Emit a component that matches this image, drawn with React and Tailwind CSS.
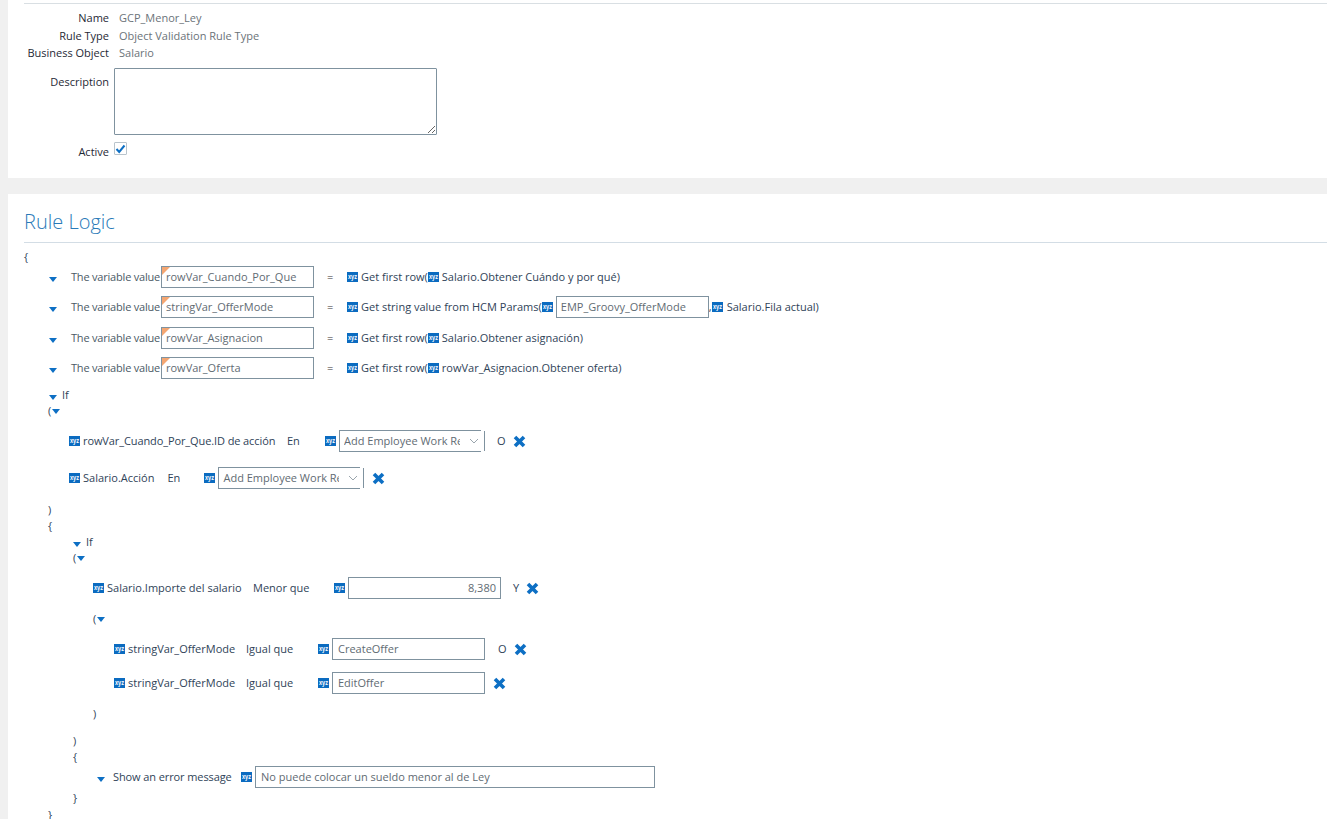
import React from 'react';

const XyzIcon = () => (
  <svg width="11" height="10" viewBox="0 0 11 10" className="shrink-0">
    <rect width="11" height="10" fill="#0b6bc0" />
    <text x="5.5" y="7.2" textAnchor="middle" textLength="9" lengthAdjust="spacingAndGlyphs" fontSize="7" fontWeight="700" fill="#fff" fontFamily="Liberation Sans, sans-serif">xyz</text>
  </svg>
);

const Caret = ({ className = 'mt-[4px]' }) => (
  <svg width="8" height="5" viewBox="0 0 8 5" className={`shrink-0 ${className}`}>
    <path d="M0 0H8L4 5Z" fill="#0d6fc4" />
  </svg>
);

const CloseIcon = () => (
  <svg width="13" height="13" viewBox="0 0 13 13" className="shrink-0">
    <path d="M2 2L11 11M11 2L2 11" stroke="#0d6fc4" strokeWidth="3.6" />
  </svg>
);

const Field = ({ value, className = '', flag = false, align = 'text-left' }) => (
  <div className={`relative ml-[3px] flex h-[22px] shrink-0 items-center border border-[#7f929f] text-[#5f6b73] ${align} ${className}`}>
    {flag && (
      <span className="absolute left-0 top-0 h-0 w-0 border-r-[8px] border-t-[8px] border-r-transparent border-t-[#f4a672]" />
    )}
    <span className="w-full">{value}</span>
  </div>
);

const Choice = () => (
  <div className="ml-[3px] flex shrink-0 items-center">
    <div className="flex h-[22px] w-[142px] items-center border-y border-l border-[#7f929f] pl-[4px] text-[#5f6b73]">
      <span className="w-[116px] overflow-hidden whitespace-nowrap">Add Employee Work Re</span>
      <svg width="10" height="6" viewBox="0 0 10 6" className="ml-[9px]">
        <path d="M1 1L5 5L9 1" fill="none" stroke="#9aa5ad" />
      </svg>
    </div>
    <span className="ml-[3px] h-[20px] w-px bg-[#7f929f]" />
  </div>
);

const Row = ({ className = '', children }) => (
  <div className={`flex h-[22px] items-center whitespace-nowrap ${className}`}>{children}</div>
);

const Line = ({ className = '', children }) => (
  <div className={`flex h-4 items-center whitespace-nowrap ${className}`}>{children}</div>
);

const VariableRow = ({ name, className, children }) => (
  <Row className={`pl-[25px] ${className}`}>
    <Caret />
    <span className="ml-[14px] w-[90px] tracking-[-0.2px] text-[#4b5a66]">The variable value</span>
    <div className="-ml-[3px]">
      <Field value={name} flag className="w-[153px] pl-[4px]" />
    </div>
    <span className="ml-[13px] w-[20px] text-[#333]">=</span>
    <XyzIcon />
    {children}
  </Row>
);

const Info = ({ label, value, height }) => (
  <div className={`flex items-center ${height}`}>
    <span className="w-[85px] text-right text-[#1f2a36]">{label}</span>
    <span className="ml-[10px] text-[#6b7379]">{value}</span>
  </div>
);

export default function App() {
  return (
    <div className="min-h-[819px] overflow-hidden bg-[#f0f0f0] pl-2 text-[11px] text-[#2f4358] [font-family:'Open_Sans',sans-serif]">
      <section className="h-[178px] bg-white pl-4 pt-[3px]">
        <div className="h-px bg-[#d9dfe3]" />
        <div className="pt-[5px]">
          <Info label="Name" value="GCP_Menor_Ley" height="h-[18px]" />
          <Info label="Rule Type" value="Object Validation Rule Type" height="h-[18px]" />
          <Info label="Business Object" value="Salario" height="h-4" />
        </div>
        <div className="mt-[7px] flex">
          <span className="mt-[6px] w-[85px] text-right text-[#1f2a36]">Description</span>
          <textarea readOnly className="ml-[5px] h-[67px] w-[323px] rounded-[1px] border border-[#7f929f]" />
        </div>
        <div className="mt-[7px] flex">
          <span className="mt-[2px] w-[85px] text-right text-[#1f2a36]">Active</span>
          <span className="ml-[5px] flex h-[13px] w-[13px] items-center justify-center rounded-[1px] border border-[#b9c4cc]">
            <svg width="11" height="10" viewBox="0 0 11 10">
              <path d="M1.5 5L4.2 8L9.5 1.5" fill="none" stroke="#0d6fc4" strokeWidth="2" />
            </svg>
          </span>
        </div>
      </section>

      <section className="mt-4 h-[625px] bg-white pl-4">
        <h2 className="flex h-[48px] items-center pt-[8px] text-[20px] font-light text-[#2a7ab8]">Rule Logic</h2>
        <div className="h-px bg-[#d3dde5]" />

        <Line className="mt-[6px]">{'{'}</Line>
        <VariableRow name="rowVar_Cuando_Por_Que" className="mt-px">
          <span className="ml-[3px]">Get first row(</span>
          <XyzIcon />
          <span className="ml-[3px]">Salario.Obtener Cuándo y por qué)</span>
        </VariableRow>
        <VariableRow name="stringVar_OfferMode" className="mt-2">
          <span className="ml-[3px]">Get string value from HCM Params(</span>
          <XyzIcon />
          <Field value="EMP_Groovy_OfferMode" className="w-[153px] pl-[4px]" />
          <span>,</span>
          <XyzIcon />
          <span className="ml-[4px]">Salario.Fila actual)</span>
        </VariableRow>
        <VariableRow name="rowVar_Asignacion" className="mt-[9px]">
          <span className="ml-[3px]">Get first row(</span>
          <XyzIcon />
          <span className="ml-[3px]">Salario.Obtener asignación)</span>
        </VariableRow>
        <VariableRow name="rowVar_Oferta" className="mt-2">
          <span className="ml-[3px]">Get first row(</span>
          <XyzIcon />
          <span className="ml-[3px]">rowVar_Asignacion.Obtener oferta)</span>
        </VariableRow>

        <Line className="mt-2 pl-[25px]">
          <Caret />
          <span className="ml-[5px]">If</span>
        </Line>
        <Line className="pl-[24px]">
          <span>(</span>
          <Caret className="ml-px mt-px" />
        </Line>
        <Row className="mt-[11px] pl-[45px]">
          <XyzIcon />
          <span className="ml-[3px] w-[191px] tracking-[-0.1px]">rowVar_Cuando_Por_Que.ID de acción</span>
          <span className="ml-[13px] w-[38px]">En</span>
          <XyzIcon />
          <Choice />
          <span className="ml-[12px]">O</span>
          <span className="ml-[7px]"><CloseIcon /></span>
        </Row>
        <Row className="mt-[15px] pl-[45px]">
          <XyzIcon />
          <span className="ml-[3px]">Salario.Acción</span>
          <span className="ml-[13px] w-[37px]">En</span>
          <XyzIcon />
          <Choice />
          <span className="ml-[8px]"><CloseIcon /></span>
        </Row>
        <Line className="mt-[13px] pl-[24px]">)</Line>
        <Line className="pl-[24px]">{'{'}</Line>

        <Line className="pl-[49px]">
          <Caret />
          <span className="ml-[5px]">If</span>
        </Line>
        <Line className="pl-[49px]">
          <span>(</span>
          <Caret className="ml-px mt-px" />
        </Line>
        <Row className="mt-[11px] pl-[69px]">
          <XyzIcon />
          <span className="ml-[3px] w-[134px]">Salario.Importe del salario</span>
          <span className="ml-[12px] w-[81px]">Menor que</span>
          <XyzIcon />
          <Field value="8,380" className="w-[153px] pr-[4px]" align="text-right" />
          <span className="ml-[12px]">Y</span>
          <span className="ml-[7px]"><CloseIcon /></span>
        </Row>
        <Line className="mt-3 pl-[69px]">
          <span>(</span>
          <Caret className="ml-px mt-px" />
        </Line>
        <Row className="mt-[11px] pl-[90px]">
          <XyzIcon />
          <span className="ml-[3px] w-[105px]">stringVar_OfferMode</span>
          <span className="ml-[13px] w-[72px]">Igual que</span>
          <XyzIcon />
          <Field value="CreateOffer" className="w-[153px] pl-[5px]" />
          <span className="ml-[13px]">O</span>
          <span className="ml-[7px]"><CloseIcon /></span>
        </Row>
        <Row className="mt-3 pl-[90px]">
          <XyzIcon />
          <span className="ml-[3px] w-[105px]">stringVar_OfferMode</span>
          <span className="ml-[13px] w-[72px]">Igual que</span>
          <XyzIcon />
          <Field value="EditOffer" className="w-[153px] pl-[5px]" />
          <span className="ml-[8px]"><CloseIcon /></span>
        </Row>
        <Line className="mt-3 pl-[69px]">)</Line>
        <Line className="mt-[11px] pl-[49px]">)</Line>
        <Line className="pl-[49px]">{'{'}</Line>
        <Row className="mt-px pl-[73px]">
          <Caret />
          <span className="ml-[8px] w-[128px] tracking-[-0.1px]">Show an error message</span>
          <XyzIcon />
          <Field value="No puede colocar un sueldo menor al de Ley" className="w-[400px] pl-[5px]" />
        </Row>
        <Line className="mt-[2px] pl-[49px]">{'}'}</Line>
        <Line className="mt-px pl-[24px]">{'}'}</Line>
      </section>
    </div>
  );
}
